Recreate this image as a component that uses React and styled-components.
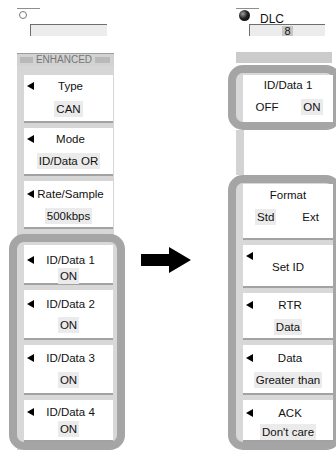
import styled, { createGlobalStyle } from "styled-components";

const Global = createGlobalStyle`
  html, body {
    margin: 0;
    padding: 0;
    overflow: hidden;
    background: #fff;
  }
  body {
    font-family: "Liberation Sans", Arial, sans-serif;
    font-size: 11.5px;
    color: #111;
  }
`;

const Page = styled.div`
  display: flex;
  align-items: flex-start;
  width: 336px;
  height: 450px;
  padding-left: 17px;
  box-sizing: border-box;
  overflow: hidden;
`;

const Column = styled.div`
  width: 97px;
  flex-shrink: 0;
  margin-left: ${(p) => p.$offset || 0}px;
`;

const ArrowSlot = styled.div`
  width: 50px;
  flex-shrink: 0;
  margin-left: 27px;
  padding-top: 247px;

  svg {
    display: block;
  }
`;

const Top = styled.div`
  height: ${(p) => p.$h}px;
  padding-top: 8px;
  box-sizing: border-box;
`;

const Rule = styled.div`
  width: 23px;
  border-top: 1px solid #8e8e8e;
`;

const KnobRow = styled.div`
  display: flex;
  align-items: flex-start;
  height: 15px;
`;

const Radio = styled.span`
  width: 6px;
  height: 6px;
  margin: 2px 0 0 2px;
  border: 1px solid #7a7a7a;
  border-radius: 50%;
  background: #fff;
`;

const Ball = styled.span`
  width: 11px;
  height: 11px;
  margin: 1px 0 0 3px;
  border-radius: 50%;
  background: radial-gradient(circle at 35% 35%, #a0a0a0 0, #222 45%, #000 100%);
`;

const KnobLabel = styled.span`
  margin: 3px 0 0 10px;
  line-height: 14px;
  font-size: 12px;
`;

const Field = styled.div`
  width: ${(p) => p.$w}px;
  height: 12px;
  margin-left: 13px;
  box-sizing: border-box;
  background: #ececec;
  border-top: 1px solid #6e6e6e;
  border-left: 1px solid #6e6e6e;
  display: flex;
  justify-content: center;
  align-items: center;
`;

const FieldValue = styled.span`
  font-size: 11px;
  line-height: 10px;
  padding: 0 2px;
  background: #c6c6c6;
`;

const Panel = styled.div`
  background: #d6d6d6;
  border-top: 1px solid #9d9d9d;
`;

const PanelHeader = styled.div`
  height: 12px;
  display: flex;
  align-items: center;
  justify-content: space-between;
  padding: 0 4px 0 3px;
  background: #d2d2d2;
`;

const HeaderBar = styled.span`
  width: ${(p) => p.$w}px;
  height: 6px;
  background: #b9b9b9;
`;

const HeaderText = styled.span`
  font-size: 10px;
  line-height: 12px;
  color: #767676;
`;

const Strip = styled.div`
  width: 96px;
  height: 11px;
  margin-bottom: 2px;
  background: #cbcbcb;
`;

const Stack = styled.div`
  padding: 9px 1px 0 7px;
`;

const Group = styled.div`
  border: 8px solid #a5a5a5;
  border-radius: 15px;
  background: #d8d8d8;
  margin: ${(p) => p.$m};
  padding: ${(p) => p.$p};
`;

const Spacer = styled.div`
  width: 8px;
  height: 45px;
  background: #d3d3d3;
`;

const Card = styled.div`
  height: ${(p) => p.$h + (p.$flat ? 0 : 2)}px;
  padding-top: ${(p) => p.$pt}px;
  box-sizing: border-box;
  background: #fff;
  border-bottom: ${(p) => (p.$flat ? "none" : "2px solid #a2a2a2")};
  display: flex;
  flex-direction: column;
  align-items: center;

  & + & {
    margin-top: 5px;
  }
`;

const LabelRow = styled.div`
  display: grid;
  width: 100%;
  align-items: center;

  & > * {
    grid-area: 1 / 1;
  }
`;

const Pointer = styled.span`
  justify-self: start;
  margin-left: 3px;
  width: 0;
  height: 0;
  border-top: 4px solid transparent;
  border-bottom: 4px solid transparent;
  border-right: 7px solid #000;
`;

const PointerRow = styled.div`
  width: 100%;
  height: 8px;
  display: flex;
`;

const Label = styled.span`
  justify-self: center;
  margin-left: ${(p) => (p.$nudge ? 4 : 0)}px;
  line-height: 14px;
  white-space: nowrap;
`;

const Value = styled.span`
  margin-top: ${(p) => p.$mt}px;
  padding: 1px 2px;
  line-height: 14px;
  background: #ebebeb;
  white-space: nowrap;
`;

const Choices = styled.div`
  width: 100%;
  margin-top: ${(p) => p.$mt}px;
  display: flex;
  justify-content: space-around;
`;

const Choice = styled.span`
  padding: 1px 2px;
  line-height: 14px;
  background: ${(p) => (p.$on ? "#ebebeb" : "transparent")};
`;

function MenuCard({ item }) {
  const { label, value, choices, pointer = true, pointerAbove, h, pt, mv, flat } = item;
  const inline = pointer && !pointerAbove;
  return (
    <Card $h={h} $pt={pt} $flat={flat}>
      {pointerAbove && (
        <PointerRow>
          <Pointer />
        </PointerRow>
      )}
      <LabelRow>
        {inline && <Pointer />}
        <Label $nudge={inline}>{label}</Label>
      </LabelRow>
      {value && <Value $mt={mv}>{value}</Value>}
      {choices && (
        <Choices $mt={mv}>
          {choices.map((c) => (
            <Choice key={c.text} $on={c.on}>
              {c.text}
            </Choice>
          ))}
        </Choices>
      )}
    </Card>
  );
}

const leftTop = [
  { label: "Type", value: "CAN", h: 46, pt: 4, mv: 8 },
  { label: "Mode", value: "ID/Data OR", h: 46, pt: 4, mv: 7 },
  { label: "Rate/Sample", value: "500kbps", h: 46, pt: 6, mv: 7 },
];

const leftGroup = [
  { label: "ID/Data 1", value: "ON", h: 38, pt: 8, mv: 1 },
  { label: "ID/Data 2", value: "ON", h: 48, pt: 7, mv: 6 },
  { label: "ID/Data 3", value: "ON", h: 48, pt: 6, mv: 7 },
  { label: "ID/Data 4", value: "ON", h: 40, pt: 5, mv: 2 },
];

const rightFirst = {
  label: "ID/Data 1",
  pointer: false,
  flat: true,
  choices: [{ text: "OFF" }, { text: "ON", on: true }],
  h: 47,
  pt: 3,
  mv: 7,
};

const rightGroup = [
  {
    label: "Format",
    pointer: false,
    choices: [{ text: "Std", on: true }, { text: "Ext" }],
    h: 54,
    pt: 4,
    mv: 7,
  },
  { label: "Set ID", pointerAbove: true, h: 41, pt: 7 },
  { label: "RTR", value: "Data", h: 45, pt: 5, mv: 7 },
  { label: "Data", value: "Greater than", h: 48, pt: 6, mv: 7 },
  { label: "ACK", value: "Don't care", h: 40, pt: 6, mv: 4 },
];

export default function App() {
  return (
    <>
      <Global />
      <Page>
        <Column>
          <Top $h={53}>
            <Rule />
            <KnobRow>
              <Radio />
            </KnobRow>
            <Field $w={77} />
          </Top>
          <Panel>
            <PanelHeader>
              <HeaderBar $w={13} />
              <HeaderText>ENHANCED</HeaderText>
              <HeaderBar $w={15} />
            </PanelHeader>
            <Stack>
              {leftTop.map((it) => (
                <MenuCard key={it.label} item={it} />
              ))}
              <Group $m="5px -12px 0 -15px" $p="3px 4px 0 7px">
                {leftGroup.map((it) => (
                  <MenuCard key={it.label} item={it} />
                ))}
              </Group>
            </Stack>
          </Panel>
        </Column>

        <ArrowSlot>
          <svg width="50" height="26" viewBox="0 0 50 26">
            <path d="M0 7H28V0L50 13L28 26V19H0Z" fill="#000" />
          </svg>
        </ArrowSlot>

        <Column $offset={45}>
          <Top $h={52}>
            <Rule />
            <KnobRow>
              <Ball />
              <KnobLabel>DLC</KnobLabel>
            </KnobRow>
            <Field $w={76}>
              <FieldValue>8</FieldValue>
            </Field>
          </Top>
          <Strip />
          <Group $m="0 -8px 0 -8px" $p="2px 0 0 7px">
            <MenuCard item={rightFirst} />
          </Group>
          <Spacer />
          <Group $m="0 -8px 0 -8px" $p="1px 0 0 7px">
            {rightGroup.map((it) => (
              <MenuCard key={it.label} item={it} />
            ))}
          </Group>
        </Column>
      </Page>
    </>
  );
}
